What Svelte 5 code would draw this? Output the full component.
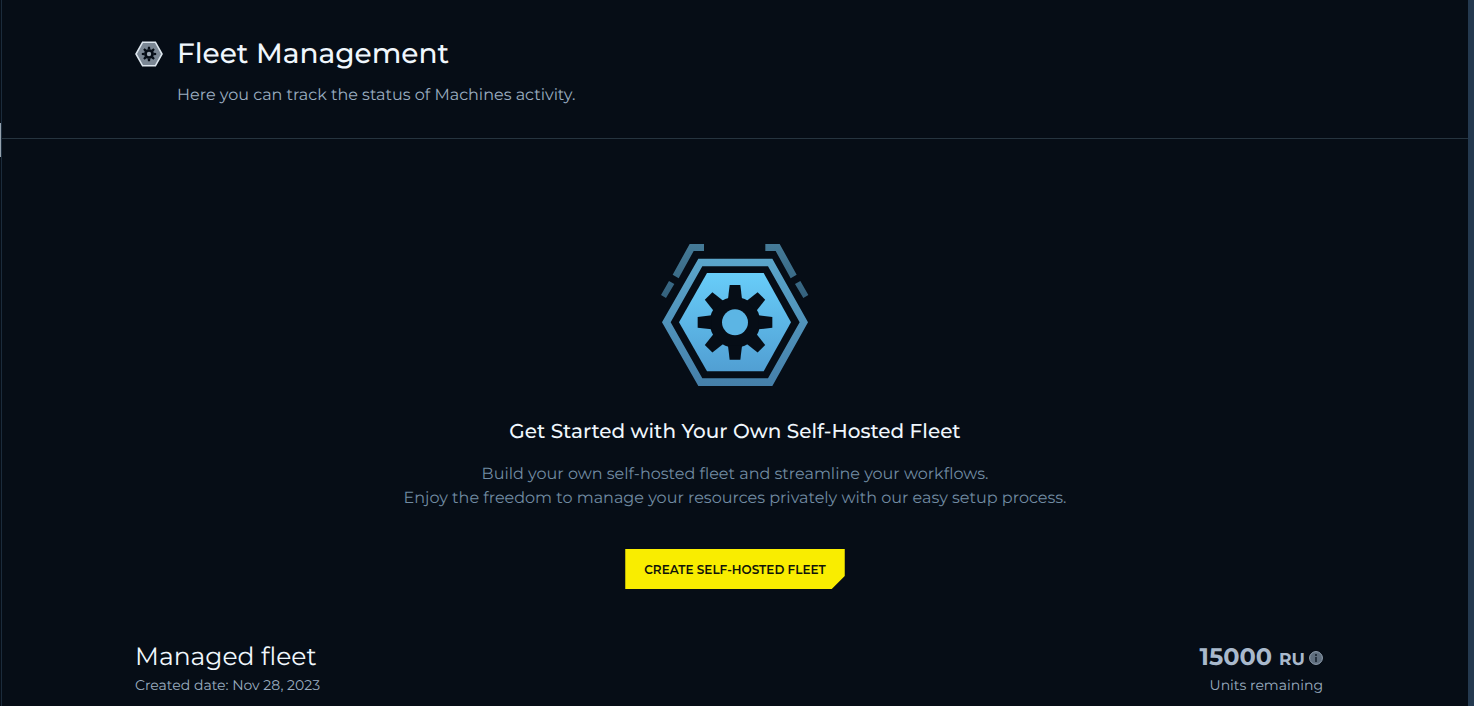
<script>
  const teeth = [0, 45, 90, 135, 180, 225, 270, 315];
</script>

{#snippet gear(cx, cy, scale)}
  <g transform="translate({cx} {cy}) scale({scale})">
    <circle r="76" />
    {#each teeth as angle}
      <path d="M-16-112H16L21-70H-21Z" transform="rotate({angle})" />
    {/each}
  </g>
{/snippet}

<div class="shell">
  <main>
    <header>
      <svg class="mark" viewBox="0 0 28 26" aria-hidden="true">
        <path d="M7.6 1.2H20.4L27 13L20.4 24.8H7.6L1 13Z" fill="#7b8794" stroke="#dde6ee" stroke-width="1.6" />
        <g fill="#060d16">{@render gear(14, 13, 0.064)}</g>
        <circle cx="14" cy="13" r="2.2" fill="#9ba6b2" />
      </svg>
      <div>
        <h1>Fleet Management</h1>
        <p class="lead">Here you can track the status of Machines activity.</p>
      </div>
    </header>

    <section class="intro">
      <svg class="emblem" viewBox="33 27 444 426" aria-hidden="true">
        <defs>
          <linearGradient id="ring" x1="0" y1="0" x2="0" y2="1">
            <stop offset="0" stop-color="#5ba6cb" />
            <stop offset="1" stop-color="#457fa9" />
          </linearGradient>
          <linearGradient id="core" x1="0" y1="0" x2="0" y2="1">
            <stop offset="0" stop-color="#68cdf9" />
            <stop offset="1" stop-color="#519fd3" />
          </linearGradient>
          <linearGradient id="bracket" x1="0" y1="0" x2="0" y2="1">
            <stop offset="0" stop-color="#457b98" />
            <stop offset="1" stop-color="#34617d" />
          </linearGradient>
        </defs>
        <path
          d="M145 71H367L474 262L367 453H145L36 262ZM157 94L62 262L157 430H354L449 262L354 94Z"
          fill="url(#ring)"
          fill-rule="evenodd"
        />
        <path d="M171 114H341L423 262L341 409H171L87 262Z" fill="url(#core)" />
        <g fill="#060d16">{@render gear(255, 262, 1)}</g>
        <circle cx="255" cy="262" r="39" fill="#5cb5e4" />
        <path d="M119 27H162V48H131L86 130L68 119ZM57 138L73 147L48 189L33 180Z" fill="url(#bracket)" />
        <path d="M389 27H346V48H377L422 130L440 119ZM451 138L435 147L460 189L475 180Z" fill="url(#bracket)" />
      </svg>
      <h2>Get Started with Your Own Self-Hosted Fleet</h2>
      <p class="copy">
        Build your own self-hosted fleet and streamline your workflows.<br />
        Enjoy the freedom to manage your resources privately with our easy setup process.
      </p>
      <button class="create" type="button">CREATE SELF-HOSTED FLEET</button>
    </section>

    <section class="managed">
      <div>
        <h3>Managed fleet</h3>
        <p class="note">Created date: Nov 28, 2023</p>
      </div>
      <div class="units">
        <p class="amount">
          <strong>15000</strong>
          <span>RU</span>
          <svg class="info" viewBox="0 0 14 14" aria-hidden="true">
            <circle cx="7" cy="7" r="6.4" fill="#5f6e7e" stroke="#94a3b3" />
            <path d="M6 3h2v2H6zM6 6h2v5H6z" fill="#26323f" />
          </svg>
        </p>
        <p class="note">Units remaining</p>
      </div>
    </section>
  </main>
</div>

<style>
  :global(body) {
    background: #060d16;
  }

  .shell {
    box-sizing: border-box;
    height: 100vh;
    overflow: hidden;
    border-right: 6px solid #24394f;
    background: linear-gradient(#94a1ad, #94a1ad) 0 123px / 1px 34px no-repeat;
    color: #f0f7fd;
    font-family: Montserrat, Inter, sans-serif;
    text-rendering: geometricPrecision;
  }

  main {
    min-height: 100vh;
    margin-left: 1px;
    border-left: 1px solid #1b2b3b;
  }

  h1,
  h2,
  h3,
  p {
    margin: 0;
  }

  header {
    display: flex;
    gap: 14px;
    padding: 36px 145px 31px 133px;
    border-bottom: 1px solid #26343f;
  }

  .mark {
    flex: none;
    width: 28px;
    height: 26px;
    margin-top: 5px;
  }

  h1 {
    font-size: 28px;
    line-height: 36px;
    font-weight: 500;
  }

  .lead {
    margin-top: 13px;
    color: #9badc0;
    font-size: 16px;
    line-height: 22px;
  }

  .intro {
    display: flex;
    flex-direction: column;
    align-items: center;
    padding-top: 105px;
    text-align: center;
  }

  .emblem {
    width: 148px;
    height: 142px;
  }

  h2 {
    margin-top: 32px;
    font-size: 20px;
    line-height: 28px;
    font-weight: 500;
  }

  .copy {
    margin-top: 17px;
    color: #718ba2;
    font-size: 16px;
    line-height: 24px;
  }

  .create {
    height: 40px;
    margin-top: 38px;
    padding: 1px 19px 0;
    border: 0;
    background: #f9ed00;
    clip-path: polygon(0 0, 100% 0, 100% 27px, calc(100% - 13px) 100%, 0 100%);
    color: #10140a;
    font: 600 12px/20px Montserrat, Inter, sans-serif;
  }

  .managed {
    display: flex;
    justify-content: space-between;
    padding: 52px 145px 0 133px;
  }

  h3 {
    font-size: 25px;
    line-height: 32px;
    font-weight: 400;
  }

  .note {
    margin-top: 2px;
    color: #9badc0;
    font-size: 14px;
    line-height: 20px;
  }

  .units {
    text-align: right;
  }

  .amount {
    display: flex;
    align-items: baseline;
    justify-content: flex-end;
    gap: 7px;
    height: 32px;
    color: #a9b9cc;
    font-size: 17px;
    line-height: 34px;
    font-weight: 700;
  }

  .amount strong {
    font-size: 24px;
    font-weight: 700;
  }

  .info {
    align-self: center;
    width: 14px;
    height: 14px;
    margin-top: 2px;
    margin-left: -3px;
  }
</style>
